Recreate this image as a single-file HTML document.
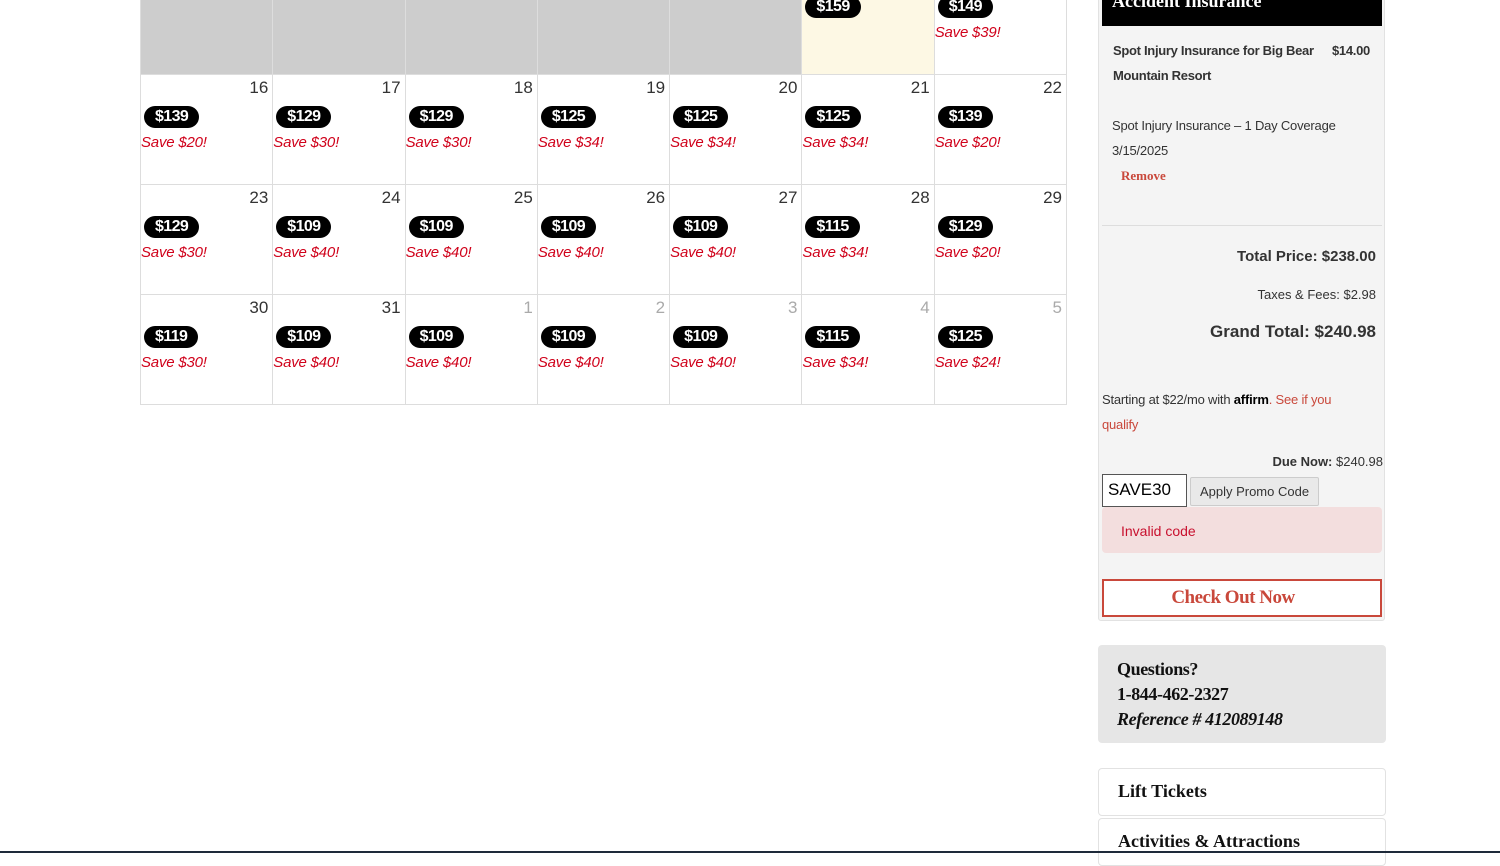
<!DOCTYPE html>
<html><head><meta charset="utf-8"><style>
body{margin:0;width:1500px;height:853px;background:#fff;position:relative;overflow:hidden;font-family:"Liberation Sans",sans-serif}
.cal{position:absolute;left:140px;top:-36px;width:926px;display:grid;grid-template-columns:repeat(7,1fr);border-left:1px solid #ddd;border-top:1px solid #ddd}
.c{height:109px;border-right:1px solid #ddd;border-bottom:1px solid #ddd;position:relative;background:#fff}
.g{background:#cdcdcd}
.y{background:#fdf8e4}
.n{position:absolute;right:4px;top:3px;font-size:17px;color:#333;line-height:20px}
.n.o{color:#aaa}
.p{position:absolute;left:3px;top:31px;height:22px;line-height:22px;padding:0 11px;border-radius:11px;background:#000;color:#fff;font-weight:bold;font-size:16px;letter-spacing:-0.6px}
.s{position:absolute;left:0;top:59px;font-style:italic;font-size:15px;color:#d0021b;letter-spacing:-0.2px}
.panel{position:absolute;left:1098px;top:-5px;width:285px;height:624px;background:#f4f4f4;border:1px solid #e2e2e2;border-radius:3px}
.ab{position:absolute;font-size:13px;color:#333}
.serif{font-family:"Liberation Serif",serif}
</style></head><body>
<div class="cal">
<div class="c g"></div><div class="c g"></div><div class="c g"></div><div class="c g"></div><div class="c g"></div>
<div class="c y"><span class="p">$159</span></div>
<div class="c"><span class="p">$149</span><span class="s">Save $39!</span></div>

<div class="c"><span class="n">16</span><span class="p">$139</span><span class="s">Save $20!</span></div>
<div class="c"><span class="n">17</span><span class="p">$129</span><span class="s">Save $30!</span></div>
<div class="c"><span class="n">18</span><span class="p">$129</span><span class="s">Save $30!</span></div>
<div class="c"><span class="n">19</span><span class="p">$125</span><span class="s">Save $34!</span></div>
<div class="c"><span class="n">20</span><span class="p">$125</span><span class="s">Save $34!</span></div>
<div class="c"><span class="n">21</span><span class="p">$125</span><span class="s">Save $34!</span></div>
<div class="c"><span class="n">22</span><span class="p">$139</span><span class="s">Save $20!</span></div>

<div class="c"><span class="n">23</span><span class="p">$129</span><span class="s">Save $30!</span></div>
<div class="c"><span class="n">24</span><span class="p">$109</span><span class="s">Save $40!</span></div>
<div class="c"><span class="n">25</span><span class="p">$109</span><span class="s">Save $40!</span></div>
<div class="c"><span class="n">26</span><span class="p">$109</span><span class="s">Save $40!</span></div>
<div class="c"><span class="n">27</span><span class="p">$109</span><span class="s">Save $40!</span></div>
<div class="c"><span class="n">28</span><span class="p">$115</span><span class="s">Save $34!</span></div>
<div class="c"><span class="n">29</span><span class="p">$129</span><span class="s">Save $20!</span></div>

<div class="c"><span class="n">30</span><span class="p">$119</span><span class="s">Save $30!</span></div>
<div class="c"><span class="n">31</span><span class="p">$109</span><span class="s">Save $40!</span></div>
<div class="c"><span class="n o">1</span><span class="p">$109</span><span class="s">Save $40!</span></div>
<div class="c"><span class="n o">2</span><span class="p">$109</span><span class="s">Save $40!</span></div>
<div class="c"><span class="n o">3</span><span class="p">$109</span><span class="s">Save $40!</span></div>
<div class="c"><span class="n o">4</span><span class="p">$115</span><span class="s">Save $34!</span></div>
<div class="c"><span class="n o">5</span><span class="p">$125</span><span class="s">Save $24!</span></div>
</div>

<div class="panel"></div>
<div style="position:absolute;left:1102px;top:0;width:280px;height:26px;background:#000"></div>
<div class="serif" style="position:absolute;left:1112px;top:-9px;color:#fff;font-weight:bold;font-size:18px">Accident Insurance</div>
<div class="ab" style="left:1113px;top:38px;font-weight:bold;line-height:25px;width:230px;letter-spacing:-0.3px">Spot Injury Insurance for Big Bear Mountain Resort</div>
<div class="ab" style="left:1332px;top:38px;font-weight:bold;line-height:25px;letter-spacing:-0.3px">$14.00</div>
<div class="ab" style="left:1112px;top:113px;line-height:25px;letter-spacing:-0.2px">Spot Injury Insurance – 1 Day Coverage<br>3/15/2025</div>
<div class="serif" style="position:absolute;left:1121px;top:168px;font-size:13px;font-weight:bold;color:#c9483b">Remove</div>
<div style="position:absolute;left:1102px;top:225px;width:280px;height:1px;background:#ddd"></div>
<div class="ab" style="right:124px;top:248px;font-size:15px;font-weight:bold">Total Price: $238.00</div>
<div class="ab" style="right:124px;top:287px;font-size:13px">Taxes &amp; Fees: $2.98</div>
<div class="ab" style="right:124px;top:322px;font-size:17px;font-weight:bold">Grand Total: $240.98</div>
<div class="ab" style="left:1102px;top:387px;line-height:25px;width:248px;letter-spacing:-0.2px">Starting at $22/mo with <b style="color:#000">affirm</b><span style="color:#c9483b">. See if you qualify</span></div>
<div class="ab" style="right:117px;top:454px"><b>Due Now:</b> $240.98</div>
<div style="position:absolute;left:1102px;top:474px;background:#fff;font-size:17px;line-height:30px;padding-left:5px;box-sizing:border-box;width:85px;height:33px;border:1px solid #555">SAVE30</div>
<div style="position:absolute;left:1190px;top:477px;width:127px;height:27px;border:1px solid #ccc;border-radius:2px;background:#e9e9e9;font-size:13px;line-height:27px;text-align:center;color:#333">Apply Promo Code</div>
<div style="position:absolute;left:1102px;top:507px;width:280px;height:46px;background:#f3dede;border-radius:4px"></div>
<div class="ab" style="left:1121px;top:523px;color:#c8102e;font-size:14px">Invalid code</div>
<div class="serif" style="position:absolute;left:1102px;top:579px;width:280px;height:38px;box-sizing:border-box;border:2px solid #c9483b;background:#fff;color:#c9483b;font-weight:bold;font-size:19px;text-align:center;line-height:34px;padding-right:18px;letter-spacing:-0.5px">Check Out Now</div>

<div style="position:absolute;left:1098px;top:645px;width:288px;height:98px;background:#e6e6e6;border-radius:4px"></div>
<div class="serif" style="position:absolute;left:1117px;top:657px;font-size:18px;line-height:25px;color:#111;font-weight:bold;letter-spacing:-0.4px">Questions?<br>1-844-462-2327<br><i>Reference # 412089148</i></div>
<div style="position:absolute;left:1098px;top:768px;width:286px;height:46px;border:1px solid #e2e2e2;border-radius:4px;background:#fff"></div>
<div class="serif" style="position:absolute;left:1118px;top:781px;font-size:18px;font-weight:bold;color:#111">Lift Tickets</div>
<div style="position:absolute;left:1098px;top:818px;width:286px;height:46px;border:1px solid #e2e2e2;border-radius:4px;background:#fff"></div>
<div class="serif" style="position:absolute;left:1118px;top:831px;font-size:18px;font-weight:bold;color:#111">Activities &amp; Attractions</div>
<div style="position:absolute;left:0;top:851px;width:1500px;height:2px;background:#1e2a3a"></div>
</body></html>
